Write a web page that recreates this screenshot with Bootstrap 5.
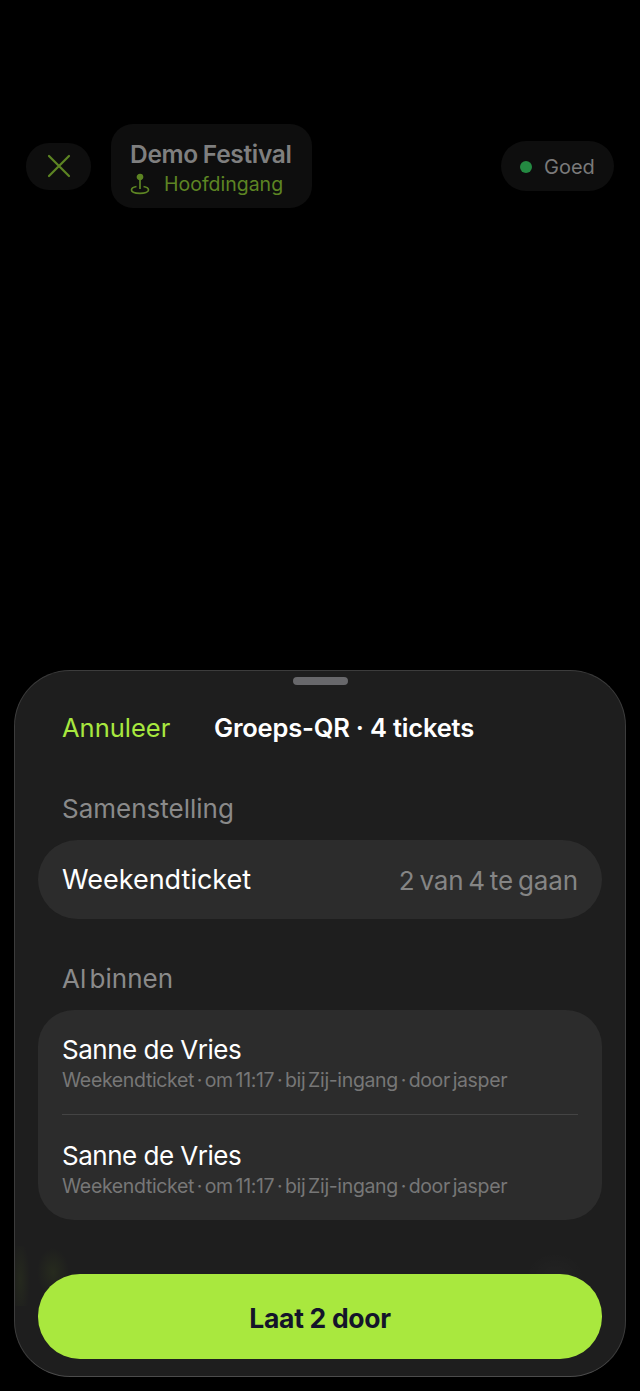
<!DOCTYPE html>
<html lang="nl">
<head>
    <meta charset="UTF-8">
    <meta name="viewport" content="width=device-width, initial-scale=1.0">
    <title>Groeps-QR</title>
    <link href="https://cdn.jsdelivr.net/npm/bootstrap@5.3.3/dist/css/bootstrap.min.css" rel="stylesheet">
    <style>
        html, body {
            height: 1391px;
            overflow: hidden;
        }
        body {
            background-color: #000;
            font-family: "Inter", "Noto Sans", sans-serif;
            color: #fff;
        }
        .screen {
            height: 1391px;
            padding: 124px 14px 14px;
        }
        .top-bar {
            height: 84px;
            padding: 0 12px;
        }
        .pill-dark {
            background-color: #0e0e0e;
        }
        .close-pill {
            width: 65px;
            height: 47px;
            border-radius: 23px;
        }
        .event-pill {
            width: 201px;
            height: 84px;
            margin-left: 20px;
            padding: 6px 0 0 19px;
            border-radius: 22px;
        }
        .event-name {
            font-size: 24.5px;
            font-weight: 600;
            line-height: 30px;
            letter-spacing: -0.3px;
            word-spacing: -1px;
            color: #7f7f7f;
        }
        .event-gate {
            gap: 14px;
            font-size: 19.5px;
            line-height: 30px;
            color: #5d8523;
        }
        .status-pill {
            width: 113px;
            height: 50px;
            padding: 2px 0 0 19px;
            border-radius: 25px;
            font-size: 20px;
            color: #7a7a7a;
        }
        .status-dot {
            width: 12px;
            height: 12px;
            border-radius: 50%;
            background-color: #248a42;
        }
        .sheet {
            height: 707px;
            padding: 0 23px;
            border: 1px solid #3c3c3c;
            border-bottom-color: #4c4c4c;
            border-radius: 56px;
            background-color: #1e1e1e;
            overflow: hidden;
        }
        .grabber {
            width: 55px;
            height: 8px;
            margin: 6px auto 0;
            border-radius: 4px;
            background-color: #68686b;
        }
        .sheet-head {
            height: 58px;
            margin-top: 15px;
            padding-left: 24px;
        }
        .cancel-link {
            width: 152px;
            padding-bottom: 1px;
            font-size: 25.5px;
            color: #a8e83f;
        }
        .sheet-title {
            padding-bottom: 2px;
            font-size: 25.5px;
            font-weight: 600;
            letter-spacing: -0.2px;
        }
        .section-label {
            margin: 0;
            padding-left: 24px;
            font-size: 26px;
            line-height: 32px;
            word-spacing: -4px;
            color: #8a8a8a;
        }
        .label-first {
            margin-top: 35px;
        }
        .label-second {
            margin-top: 44px;
        }
        .row-group {
            background-color: #2c2c2c;
        }
        .summary-row {
            height: 79px;
            margin-top: 15px;
            padding: 2px 24px 0;
            border-radius: 40px;
            font-size: 27px;
        }
        .summary-count {
            font-size: 26px;
            letter-spacing: -0.1px;
            word-spacing: -2.4px;
            color: #858585;
        }
        .people-card {
            margin-top: 15px;
            border-radius: 36px;
        }
        .person-row {
            height: 104px;
            margin: 0 24px;
            padding-top: 22px;
        }
        .person-row + .person-row {
            height: 106px;
            padding-top: 23px;
            border-top: 1px solid #444;
        }
        .person-name {
            font-size: 26px;
            line-height: 36px;
            letter-spacing: -0.5px;
        }
        .person-meta {
            font-size: 19.5px;
            line-height: 25px;
            letter-spacing: -0.35px;
            word-spacing: -2.4px;
            color: #777;
        }
        .glow {
            position: absolute;
            left: 0;
            right: 0;
            bottom: 70px;
            height: 60px;
            background:
                radial-gradient(ellipse 16px 24px at 38px 26px, rgba(90, 120, 30, .14), transparent),
                radial-gradient(ellipse 10px 40px at 5px 34px, rgba(90, 120, 30, .12), transparent),
                radial-gradient(ellipse 30px 24px at 540px 30px, rgba(255, 255, 255, .02), transparent);
        }
        .go-btn {
            position: absolute;
            left: 23px;
            right: 23px;
            bottom: 17px;
            height: 85px;
            padding-top: 10px;
            border: 0;
            border-radius: 42px;
            background-color: #a9e83e;
            color: #14142a;
            font-size: 26.5px;
            font-weight: 700;
            letter-spacing: -0.3px;
        }
        .go-btn:hover, .go-btn:active {
            background-color: #a9e83e;
            color: #14142a;
        }
    </style>
</head>
<body>
    <div class="screen d-flex flex-column justify-content-between">
        <div class="top-bar d-flex align-items-center">
            <div class="close-pill pill-dark d-flex align-items-center justify-content-center">
                <svg width="24" height="24" viewBox="0 0 24 24" fill="none" stroke="#5d8523" stroke-width="2.2" stroke-linecap="round"><path d="M2 2l20 20M22 2L2 22"/></svg>
            </div>
            <div class="event-pill pill-dark d-flex flex-column justify-content-center">
                <div class="event-name">Demo Festival</div>
                <div class="event-gate d-flex align-items-center">
                    <svg width="20" height="22" viewBox="0 0 20 22" fill="none" stroke="#5d8523" stroke-width="1.7"><circle cx="10" cy="4" r="2.5" fill="#5d8523"/><path d="M10 6v10"/><path d="M6.500 13.500C3.500 14 1.500 15.200 1.500 17c0 2 3.800 3.300 8.500 3.300s8.500-1.300 8.500-3.300c0-1.800-2-3-5-3.500"/></svg>
                    <span>Hoofdingang</span>
                </div>
            </div>
            <div class="status-pill pill-dark d-flex align-items-center gap-2 ms-auto">
                <span class="status-dot me-1"></span>
                <span>Goed</span>
            </div>
        </div>

        <div class="sheet position-relative">
            <div class="grabber"></div>
            <div class="sheet-head d-flex align-items-center">
                <span class="cancel-link">Annuleer</span>
                <span class="sheet-title">Groeps-QR · 4 tickets</span>
            </div>
            <p class="section-label label-first">Samenstelling</p>
            <div class="summary-row row-group d-flex align-items-center justify-content-between">
                <span>Weekendticket</span>
                <span class="summary-count">2 van 4 te gaan</span>
            </div>
            <p class="section-label label-second">Al binnen</p>
            <div class="people-card row-group">
                <div class="person-row">
                    <div class="person-name">Sanne de Vries</div>
                    <div class="person-meta">Weekendticket · om 11:17 · bij Zij-ingang · door jasper</div>
                </div>
                <div class="person-row">
                    <div class="person-name">Sanne de Vries</div>
                    <div class="person-meta">Weekendticket · om 11:17 · bij Zij-ingang · door jasper</div>
                </div>
            </div>
            <div class="glow"></div>
            <button class="btn go-btn" type="button">Laat 2 door</button>
        </div>
    </div>
</body>
</html>
